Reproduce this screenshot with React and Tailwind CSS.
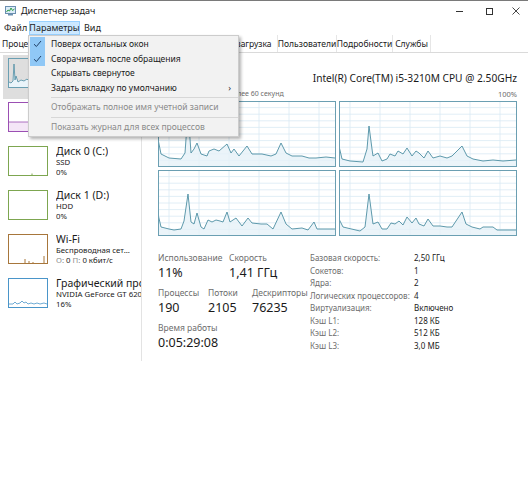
import React from 'react'

// graph points in px of a 178x66 box (border included)
const CPU_GRAPHS = [
  [[0,38],[3,53],[11,57],[23,58],[27,52],[30,10],[33,52],[36,48],[39,42],[43,53],[49,55],[51,50],[56,48],[61,50],[69,43],[73,52],[76,48],[81,55],[89,45],[94,53],[104,53],[113,55],[118,53],[123,42],[128,52],[134,55],[144,55],[151,57],[158,57],[168,56],[177,57]],
  [[0,45],[3,58],[11,60],[24,61],[28,48],[30,25],[33,48],[34,55],[39,52],[43,60],[48,58],[51,53],[56,55],[59,50],[64,53],[68,47],[73,55],[77,50],[80,52],[85,57],[89,50],[94,57],[101,55],[108,57],[113,55],[123,45],[128,55],[134,58],[144,60],[154,59],[164,60],[177,59]],
  [[0,44],[3,57],[11,59],[16,60],[23,59],[26,51],[30,24],[33,52],[36,54],[39,43],[43,57],[46,59],[50,50],[54,52],[58,50],[62,51],[65,52],[69,42],[72,52],[78,48],[84,56],[90,48],[94,53],[103,54],[109,54],[115,59],[123,42],[128,54],[134,59],[144,58],[150,60],[156,52],[159,59],[168,59],[177,59]],
  [[0,49],[4,57],[21,61],[26,57],[30,24],[34,54],[39,52],[43,59],[48,59],[52,53],[56,54],[60,51],[64,55],[68,47],[73,53],[77,48],[80,54],[85,56],[89,49],[94,56],[101,56],[108,57],[113,57],[123,42],[127,54],[133,57],[141,59],[144,57],[154,57],[158,60],[164,60],[177,60]],
]

const CPU_INFO = [
  ['Базовая скорость:', '2,50 ГГц'],
  ['Сокетов:', '1'],
  ['Ядра:', '2'],
  ['Логических процессоров:', '4'],
  ['Виртуализация:', 'Включено'],
  ['Кэш L1:', '128 КБ'],
  ['Кэш L2:', '512 КБ'],
  ['Кэш L3:', '3,0 МБ'],
]

const TABS = [
  ['Процессы', 'w-[42px]'],
  ['Производительность', 'w-[84px]'],
  ['Журнал приложений', 'w-[84px]'],
  ['Автозагрузка', 'w-[66px]'],
  ['Пользователи', 'w-[59px]'],
  ['Подробности', 'w-[56px]'],
  ['Службы', 'w-[38px]'],
]

function toPts(pts) {
  return pts.map(([x, y]) => `${x},${y}`).join(' ')
}

function AppIcon() {
  return (
    <svg width="11" height="10" viewBox="0 0 11 10" className="ml-[5px]">
      <rect x="0.5" y="0.5" width="10" height="7" fill="#dcecf8" stroke="#6b8fb0" />
      <polyline points="1.5,6 3,4 4.5,5 6,2 7.5,4.5 9.5,3" fill="none" stroke="#2f9e44" strokeWidth="1" />
      <rect x="3" y="8" width="5" height="1.5" fill="#6b8fb0" />
    </svg>
  )
}

function TitleBar() {
  return (
    <div className="flex h-[20px] items-center">
      <AppIcon />
      <span className="ml-[5px] text-[9px] leading-[12px] text-[#1a1a1a]">Диспетчер задач</span>
      <div className="ml-auto flex h-full text-[#333]">
        <div className="flex w-[30px] items-center justify-center">
          <div className="h-px w-[7px] bg-[#333]" />
        </div>
        <div className="flex w-[30px] items-center justify-center">
          <div className="h-[7px] w-[7px] border border-[#333]" />
        </div>
        <div className="flex w-[24px] items-center justify-center">
          <svg width="8" height="8" viewBox="0 0 8 8">
            <path d="M0.5 0.5L7.5 7.5M7.5 0.5L0.5 7.5" stroke="#333" strokeWidth="0.9" />
          </svg>
        </div>
      </div>
    </div>
  )
}

function MenuBar() {
  return (
    <div className="flex h-[14px] items-center text-[9px] leading-[12px] text-[#1a1a1a]">
      <div className="w-[29px] pl-[4px]">Файл</div>
      <div className="flex h-full w-[51px] items-center justify-center border border-[#99d1ff] bg-[#cce8ff]">
        Параметры
      </div>
      <div className="pl-[4px]">Вид</div>
    </div>
  )
}

function TabStrip() {
  return (
    <div className="flex h-[18px] items-center border-b border-[#dadada] pl-[2px] text-[8.5px] leading-[12px] text-[#1a1a1a]">
      {TABS.map(([name, w]) => (
        <div
          key={name}
          className={`${w} flex h-full shrink-0 items-center justify-center whitespace-nowrap border-r border-[#e6e6e6]`}
        >
          {name}
        </div>
      ))}
    </div>
  )
}

function Thumb({ color, children }) {
  return (
    <svg width="40" height="30" viewBox="0 0 40 30" className="shrink-0">
      {children}
      <rect x="0.5" y="0.5" width="39" height="29" fill="none" stroke={color} />
    </svg>
  )
}

const DEVICES = [
  {
    title: 'ЦП',
    lines: ['11% 1,41 ГГц'],
    selected: true,
    thumb: (
      <Thumb color="#6b9fb2">
        <polygon points="1,29 1,24 3,25 5,23 6,6 7,22 8,18 10,24 13,22 16,23 19,21 22,24 26,22 30,25 34,23 39,25 39,29" fill="#eaf4fa" />
        <polyline points="1,24 3,25 5,23 6,6 7,22 8,18 10,24 13,22 16,23 19,21 22,24 26,22 30,25 34,23 39,25" fill="none" stroke="#4b8ca2" strokeWidth="0.8" />
      </Thumb>
    ),
  },
  {
    title: 'Память',
    lines: ['1,3/3,9 ГБ (33%)'],
    thumb: (
      <Thumb color="#9b4fb3">
        <rect x="1" y="20" width="38" height="9" fill="#f4e6f7" />
        <line x1="1" y1="20" x2="39" y2="20" stroke="#9b4fb3" strokeWidth="0.8" />
      </Thumb>
    ),
  },
  {
    title: 'Диск 0 (C:)',
    lines: ['SSD', '0%'],
    thumb: (
      <Thumb color="#7da650">
        <line x1="24" y1="29" x2="24" y2="27.5" stroke="#7da650" />
      </Thumb>
    ),
  },
  {
    title: 'Диск 1 (D:)',
    lines: ['HDD', '0%'],
    thumb: <Thumb color="#7da650" />,
  },
  {
    title: 'Wi-Fi',
    lines: ['Беспроводная сет...', 'wifi'],
    thumb: (
      <Thumb color="#a7763b">
        <path d="M17 29V25M21 29V27M25 29V28M36 29V22" stroke="#a7763b" strokeWidth="1" />
      </Thumb>
    ),
  },
  {
    title: 'Графический про',
    lines: ['NVIDIA GeForce GT 620M', '16%'],
    thumb: (
      <Thumb color="#4a95c9">
        <polyline
          points="1,26 5,26 7,24 9,26 12,25 14,23 16,25 18,24 20,26 23,25 26,26 29,25 32,26 36,25 39,26"
          fill="none"
          stroke="#4a95c9"
          strokeWidth="0.8"
        />
      </Thumb>
    ),
  },
]

function Sidebar() {
  return (
    <div className="w-[142px] shrink-0 border-r border-[#e3e3e3] pt-[2px]">
      {DEVICES.map((d) => (
        <div
          key={d.title}
          className={`ml-[3px] flex h-[44px] gap-[8px] pl-[5px] pt-[3px] ${d.selected ? 'bg-[#dedede]' : ''}`}
        >
          {d.thumb}
          <div className="-mt-px min-w-0 overflow-hidden whitespace-nowrap text-[#1a1a1a]">
            <div className="text-[10.5px] leading-[12px]">{d.title}</div>
            {d.lines.map((l) =>
              l === 'wifi' ? (
                <div key={l} className="text-[7.8px] leading-[10px]">
                  <span className="text-[#8a8a8a]">О:</span> 0 <span className="text-[#8a8a8a]">П:</span> 0 кбит/с
                </div>
              ) : (
                <div key={l} className="text-[7.8px] leading-[10px]">
                  {l}
                </div>
              )
            )}
          </div>
        </div>
      ))}
    </div>
  )
}

function CpuGraph({ points }) {
  const line = toPts(points)
  return (
    <svg viewBox="0 0 178 66" preserveAspectRatio="none" className="block h-[66px] w-full">
      {[11, 41, 71, 101, 131, 161].map((x) => (
        <line key={x} x1={x} y1="0" x2={x} y2="66" stroke="#d9eaf4" strokeWidth="0.8" />
      ))}
      {[1, 2, 3, 4, 5, 6, 7, 8, 9].map((i) => (
        <line key={i} x1="0" y1={i * 6.6} x2="178" y2={i * 6.6} stroke="#d9eaf4" strokeWidth="0.8" />
      ))}
      <polygon points={`0,66 ${line} 178,66`} fill="#e6f1f8" fillOpacity="0.8" />
      <polyline points={line} fill="none" stroke="#4d8ea3" strokeWidth="0.9" />
      <rect x="0.5" y="0.5" width="177" height="65" fill="none" stroke="#6b9fb2" />
    </svg>
  )
}

function Stat({ label, value, className = '' }) {
  return (
    <div className={className}>
      <div className="text-[8.5px] leading-[12px] text-[#6d6d6d]">{label}</div>
      <div className="text-[12.5px] leading-[18px] text-[#1a1a1a]">{value}</div>
    </div>
  )
}

function CpuPanel() {
  return (
    <div className="min-w-0 flex-1 pl-[16px] pr-[11px] pt-[10px]">
      <div className="flex h-[25px] items-end justify-between">
        <div className="text-[20px] leading-[25px]">ЦП</div>
        <div className="mb-[3px] text-[10.2px] leading-[14px] text-[#1a1a1a]">
          Intel(R) Core(TM) i5-3210M CPU @ 2.50GHz
        </div>
      </div>
      <div className="flex h-[12px] items-center justify-between text-[7px] leading-[12px] text-[#6d6d6d]">
        <span>% использования за более 60 секунд</span>
        <span className="text-[7.5px]">100%</span>
      </div>
      <div className="mt-px grid grid-cols-2 gap-[3px]">
        {CPU_GRAPHS.map((p, i) => (
          <CpuGraph key={i} points={p} />
        ))}
      </div>
      <div className="mt-[16px] flex">
        <div className="w-[152px] shrink-0">
          <div className="mb-[5px] flex">
            <Stat label="Использование" value="11%" className="w-[71px]" />
            <Stat label="Скорость" value="1,41 ГГц" />
          </div>
          <div className="mb-[5px] flex">
            <Stat label="Процессы" value="190" className="w-[50px]" />
            <Stat label="Потоки" value="2105" className="w-[44px]" />
            <Stat label="Дескрипторы" value="76235" />
          </div>
          <Stat label="Время работы" value="0:05:29:08" />
        </div>
        <div className="grid grid-cols-[104px_auto] text-[8px] leading-[12px]">
          {CPU_INFO.map(([k, v]) => (
            <React.Fragment key={k}>
              <div className="whitespace-nowrap text-[#6d6d6d]">{k}</div>
              <div className="whitespace-nowrap text-[#1a1a1a]">{v}</div>
            </React.Fragment>
          ))}
        </div>
      </div>
    </div>
  )
}

function Check() {
  return (
    <svg width="9" height="8" viewBox="0 0 9 8">
      <path d="M1 4.2L3.4 6.5L8 1" fill="none" stroke="#1f3f66" strokeWidth="1" />
    </svg>
  )
}

function MenuItem({ checked, disabled, submenu, children }) {
  return (
    <div className="flex h-[14.5px] items-center">
      <div className={`ml-px flex h-full w-[15px] items-center justify-center ${checked ? 'bg-[#90c8f6]' : ''}`}>
        {checked && <Check />}
      </div>
      <div className={`flex-1 pl-[6px] ${disabled ? 'text-[#8a8a8a]' : 'text-[#1a1a1a]'}`}>{children}</div>
      {submenu && <div className="pr-[7px] text-[9px] text-[#333]">›</div>}
    </div>
  )
}

function Separator() {
  return (
    <div className="flex h-[5px] items-center pl-[22px]">
      <div className="h-px w-full bg-[#d7d7d7]" />
    </div>
  )
}

function OptionsMenu() {
  return (
    <div className="absolute left-[28px] top-[34px] w-[211px] border border-[#cccccc] bg-[#f2f2f2] pb-[2px] pt-px text-[8.5px] leading-[12px] shadow-[2px_2px_3px_rgba(0,0,0,0.3)]">
      <MenuItem checked>Поверх остальных окон</MenuItem>
      <MenuItem checked>Сворачивать после обращения</MenuItem>
      <MenuItem>Скрывать свернутое</MenuItem>
      <MenuItem submenu>Задать вкладку по умолчанию</MenuItem>
      <Separator />
      <MenuItem disabled>Отображать полное имя учетной записи</MenuItem>
      <Separator />
      <MenuItem disabled>Показать журнал для всех процессов</MenuItem>
    </div>
  )
}

export default function App() {
  return (
    <div className="relative h-[480px] w-[528px] overflow-hidden border-t border-[#7a7a7a] bg-white font-['Segoe_UI','Noto_Sans',sans-serif]">
      <TitleBar />
      <MenuBar />
      <TabStrip />
      <div className="flex h-[308px]">
        <Sidebar />
        <CpuPanel />
      </div>
      <OptionsMenu />
    </div>
  )
}
